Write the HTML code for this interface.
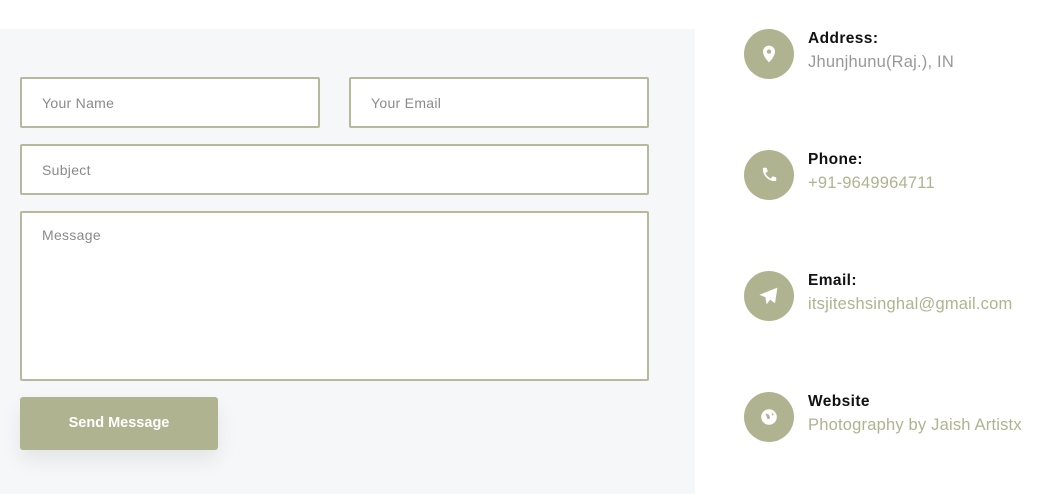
<!DOCTYPE html>
<html><head><style>
body{margin:0;width:1061px;height:494px;background:#fff;font-family:"Liberation Sans",sans-serif;position:relative;overflow:hidden}
.panel{position:absolute;left:0;top:29px;width:695px;bottom:0;background:#f6f7f9}
.in{position:absolute;box-sizing:border-box;border:2px solid #b8b89c;background:#fff;border-radius:2px;color:#8a8a8a;font-size:14px;padding-left:20px;letter-spacing:.3px}
.btn{position:absolute;left:20px;top:397px;width:198px;height:53px;background:#b0b38f;border-radius:3px;color:#fff;font-size:14.5px;font-weight:bold;text-align:center;line-height:53px;box-shadow:0 10px 20px rgba(0,0,0,.08)}
.c{position:absolute;left:744px;width:50px;height:50px;border-radius:50%;background:#b0b38f}
.c svg{position:absolute;left:13px;top:13px}
.t{position:absolute;left:808px;font-size:15.5px;font-weight:600;color:#111;letter-spacing:.4px}
.v{position:absolute;left:808px;font-size:16.5px;color:#b0b38f;letter-spacing:.2px}
</style></head><body>
<div class="panel"></div>
<div class="in" style="left:20px;top:77px;width:300px;height:51px;line-height:48px">Your Name</div>
<div class="in" style="left:349px;top:77px;width:300px;height:51px;line-height:48px">Your Email</div>
<div class="in" style="left:20px;top:144px;width:629px;height:51px;line-height:48px">Subject</div>
<div class="in" style="left:20px;top:211px;width:629px;height:170px;padding-top:13px;line-height:18px">Message</div>
<div class="btn">Send Message</div>
<div class="c" style="top:29px"><svg width="24" height="24" viewBox="0 0 20 20"><path d="M10 3a5 5 0 0 0-5 5c0 4 5 9 5 9s5-5 5-9a5 5 0 0 0-5-5z" fill="#fff"/><circle cx="10" cy="8" r="1.8" fill="#b0b38f"/></svg></div>
<div class="t" style="top:30px">Address:</div><div class="v" style="top:53px;color:#999">Jhunjhunu(Raj.), IN</div>
<div class="c" style="top:150px"><svg width="24" height="24" viewBox="0 0 20 20"><path d="M5 4l3 0 1 3-2 1.5c1 2 2.5 3.5 4.5 4.5L13 11l3 1v3c-6 1-12-5-11-11z" fill="#fff"/></svg></div>
<div class="t" style="top:151px">Phone:</div><div class="v" style="top:174px">+91-9649964711</div>
<div class="c" style="top:271px"><svg width="24" height="24" viewBox="0 0 20 20"><path d="M17 3L2 9l5 2 1 6 3-4 4 3z" fill="#fff"/></svg></div>
<div class="t" style="top:272px">Email:</div><div class="v" style="top:295px">itsjiteshsinghal@gmail.com</div>
<div class="c" style="top:392px"><svg width="24" height="24" viewBox="0 0 20 20"><circle cx="10" cy="10" r="6.5" fill="#fff"/><path d="M7 7l3 1 1 3-2 1zM12 6l2 2-1 1z" fill="#b0b38f"/></svg></div>
<div class="t" style="top:393px">Website</div><div class="v" style="top:416px">Photography by Jaish Artistx</div>
</body></html>
